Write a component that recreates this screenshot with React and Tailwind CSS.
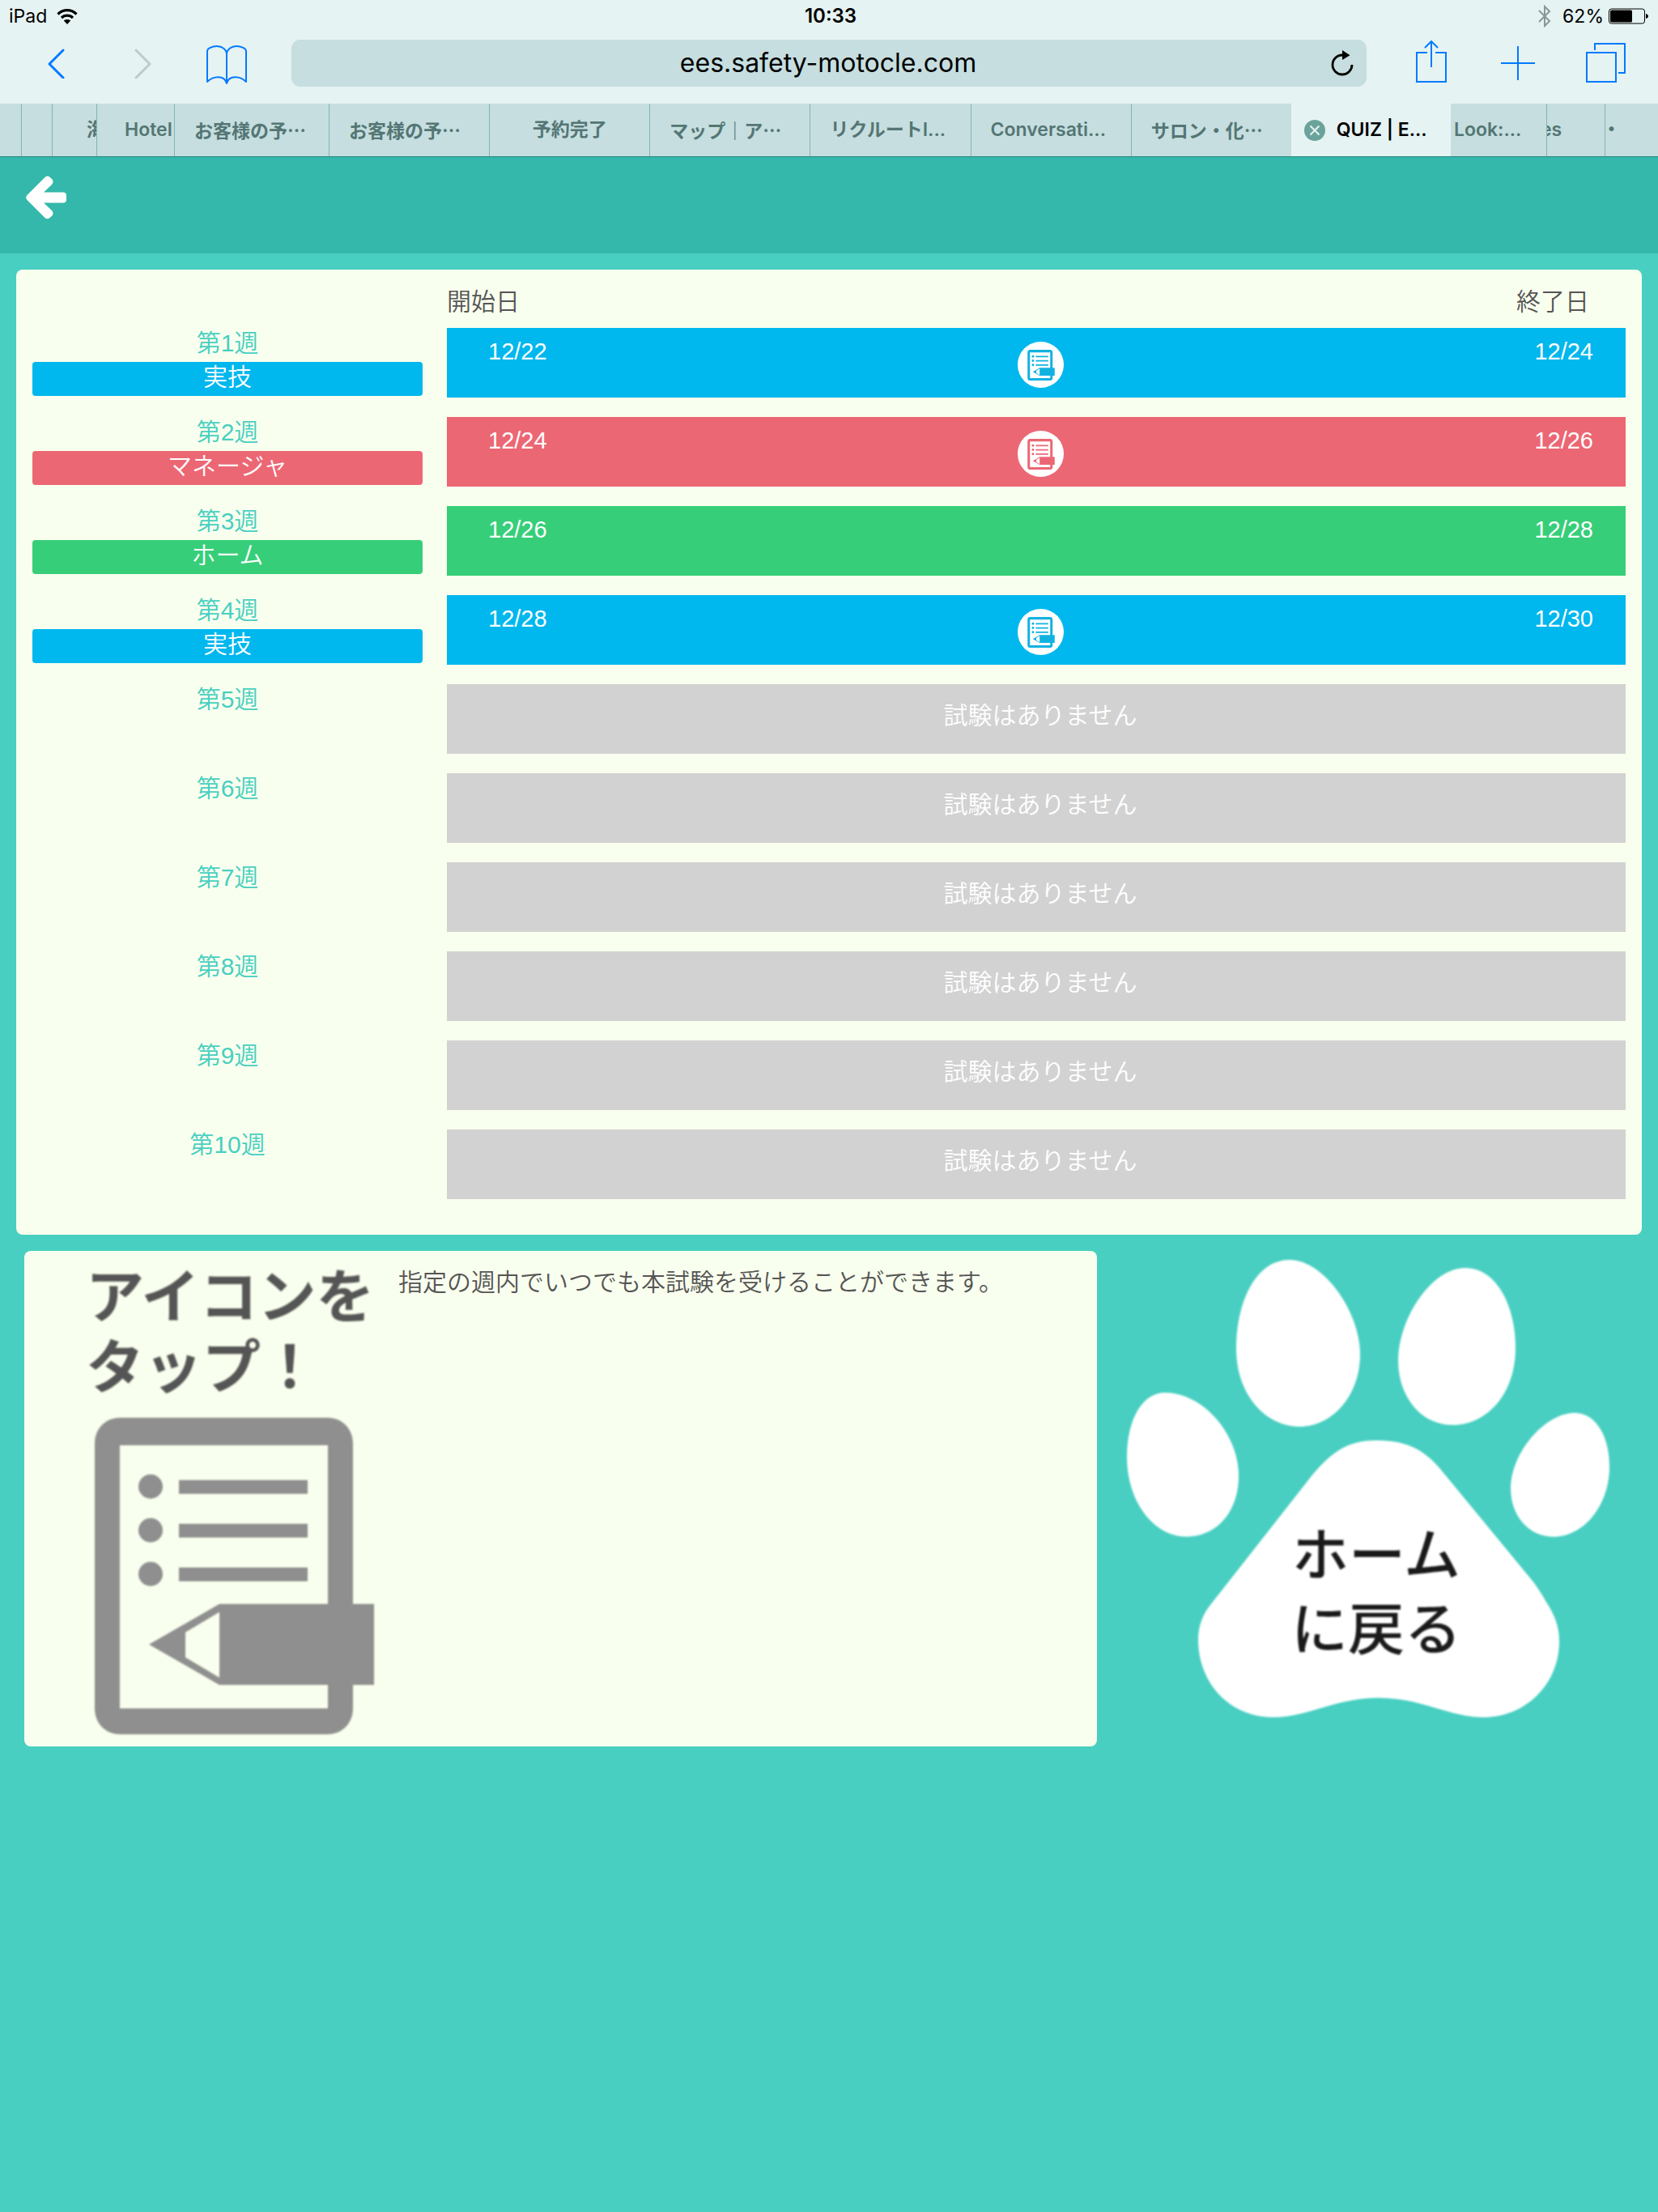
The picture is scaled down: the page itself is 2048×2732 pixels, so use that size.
const SANS = "font-['Liberation_Sans','Noto_Sans_CJK_JP',sans-serif]";

const BLUE = "bg-[#00b7ee]";
const RED = "bg-[#ec6774]";
const GREEN = "bg-[#37ce79]";

const weeks = [
  { week: "第1週", kind: "実技", from: "12/22", to: "12/24", bar: BLUE, ink: "text-[#12b2e0]", exam: true },
  { week: "第2週", kind: "マネージャ", from: "12/24", to: "12/26", bar: RED, ink: "text-[#ec6774]", exam: true },
  { week: "第3週", kind: "ホーム", from: "12/26", to: "12/28", bar: GREEN, ink: "text-[#37ce79]", exam: false },
  { week: "第4週", kind: "実技", from: "12/28", to: "12/30", bar: BLUE, ink: "text-[#12b2e0]", exam: true },
  { week: "第5週" },
  { week: "第6週" },
  { week: "第7週" },
  { week: "第8週" },
  { week: "第9週" },
  { week: "第10週" },
];

const JP = "font-['Noto_Sans_CJK_JP',sans-serif]";

const tabs = [
  { label: "", size: "w-[27px] shrink-0", text: "" },
  { label: "", size: "w-[38px] shrink-0", text: "" },
  { label: "海", size: "w-[55px] shrink-0", text: "pl-[42px]" },
  { label: "Hotel", size: "w-24 shrink-0", text: "pl-[34px]" },
  { label: "お客様の予…", size: "w-[191px] shrink-0", text: "pl-6 " + JP },
  { label: "お客様の予…", size: "flex-1", text: "pl-6 " + JP },
  { label: "予約完了", size: "flex-1", text: "w-full text-center" },
  { label: "マップ｜ア…", size: "flex-1", text: "pl-6 " + JP },
  { label: "リクルートI...", size: "flex-1", text: "pl-6" },
  { label: "Conversati...", size: "flex-1", text: "pl-6" },
  { label: "サロン・化…", size: "flex-1", text: "pl-6 " + JP, last: true },
  { label: "QUIZ | E...", size: "flex-1", active: true },
  { label: "Look:...", size: "w-[119px] shrink-0", text: "pl-1" },
  { label: "es", size: "w-[72px] shrink-0", text: "-ml-2" },
  { label: "・", size: "w-[65px] shrink-0", text: "-ml-1", last: true },
];

function ChecklistIcon({ className }) {
  return (
    <svg viewBox="0 0 345 391" className={className} fill="currentColor" aria-hidden="true">
      <path
        fillRule="evenodd"
        d="M31 0H288C306 0 319 14 319 32V230H345V330H319V359C319 377 306 391 288 391H31C13 391 0 377 0 359V32C0 14 13 0 31 0ZM31 34V359H288V330H154L67 280L154 230H288V34ZM112 265V296L154 321V240Z"
      />
      <circle cx="69" cy="85" r="15" />
      <circle cx="69" cy="139" r="15" />
      <circle cx="69" cy="193" r="15" />
      <path d="M104 77h159v17H104zM104 131h159v17H104zM104 185h159v17H104z" />
    </svg>
  );
}

function StatusBar() {
  return (
    <div className="grid h-10 grid-cols-3 items-center px-[11px] text-[23px] leading-10 text-black">
      <div className="flex items-center gap-3">
        <span>iPad</span>
        <svg viewBox="0 0 26 19" className="h-[19px] w-[26px]" aria-label="Wi-Fi">
          <path d="M1.5 6.5C8 0 18 0 24.500 6.500" fill="none" stroke="#000" strokeWidth="3.200" />
          <path d="M6 11C10 7.200 16 7.200 20 11" fill="none" stroke="#000" strokeWidth="3.200" />
          <path d="M13 19L8.800 14.600C11 12.600 15 12.600 17.200 14.600Z" />
        </svg>
      </div>
      <span className="pl-1 text-center text-2xl leading-10 font-semibold">10:33</span>
      <div className="flex items-center justify-end gap-[6px]">
        <svg viewBox="0 0 16 28" className="mr-2 h-7 w-4" fill="none" stroke="#8b9696" strokeWidth="2" aria-label="Bluetooth">
          <path d="M1 7L14 20L8 26V2L14 8L1 21" />
        </svg>
        <span>62%</span>
        <svg viewBox="0 0 50 20" className="h-5 w-[50px]" aria-label="Battery">
          <rect x="0.500" y="1" width="44" height="18" rx="3" fill="none" stroke="#000" />
          <rect x="2" y="2.500" width="27" height="15" rx="1.500" />
          <path d="M46 7C50 8 50 12 46 13Z" />
        </svg>
      </div>
    </div>
  );
}

function Toolbar() {
  return (
    <div className="flex h-[88px] items-start pt-[9px]">
      <div className="flex h-[58px] w-[360px] shrink-0 items-center">
        <button type="button" aria-label="Back" className="ml-[58px]">
          <svg viewBox="0 0 22 38" className="h-[38px] w-[22px]" fill="none" stroke="#007aff" strokeWidth="3" strokeLinecap="round" strokeLinejoin="round">
            <path d="M20 3L3 20L20 37" />
          </svg>
        </button>
        <button type="button" aria-label="Forward" className="ml-[85px]">
          <svg viewBox="0 0 22 38" className="h-[38px] w-[22px]" fill="none" stroke="#bfcaca" strokeWidth="3" strokeLinecap="round" strokeLinejoin="round">
            <path d="M3 3L20 20L3 37" />
          </svg>
        </button>
        <button type="button" aria-label="Bookmarks" className="ml-[67px]">
          <svg viewBox="0 0 52 52" className="h-[52px] w-[52px]" fill="none" stroke="#007aff" strokeWidth="2" strokeLinejoin="round">
            <path d="M26 15C26 9 20 5 14 5C8 5 2 8 2 11V49C9 42 23 40 26 51C29 40 43 42 50 49V11C50 8 44 5 38 5C32 5 26 9 26 15ZM26 15V51" />
          </svg>
        </button>
      </div>
      <div className="flex h-[58px] flex-1 items-center rounded-[11px] bg-[#c6dedf] pr-4 pl-[42px]">
        <input
          type="text"
          readOnly
          aria-label="Address"
          defaultValue="ees.safety-motocle.com"
          className="min-w-0 flex-1 bg-transparent text-center text-[32px] leading-10 text-black outline-none"
        />
        <button type="button" aria-label="Reload">
          <svg viewBox="0 0 28 32" className="h-8 w-7" aria-hidden="true">
            <path d="M26 18A12 12 0 1 1 14 6" fill="none" stroke="#000" strokeWidth="2.800" />
            <path d="M14 0L23.500 6.200L14 12Z" />
          </svg>
        </button>
      </div>
      <div className="flex h-[58px] w-[360px] shrink-0 items-center">
        <button type="button" aria-label="Share" className="ml-[60px]">
          <svg viewBox="0 0 40 56" className="h-14 w-10" fill="none" stroke="#007aff" strokeWidth="2">
            <path d="M15 15H2V51H38V15H25M20 33V1M12 9L20 1L28 9" />
          </svg>
        </button>
        <button type="button" aria-label="New tab" className="ml-[65px]">
          <svg viewBox="0 0 44 44" className="h-11 w-11" fill="none" stroke="#007aff" strokeWidth="2">
            <path d="M22 1V43M1 22H43" />
          </svg>
        </button>
        <button type="button" aria-label="Show tabs" className="ml-[61px]">
          <svg viewBox="0 0 50 50" className="h-[50px] w-[50px]" fill="none" stroke="#007aff" strokeWidth="2">
            <path d="M2 12H38V48H2ZM12 9V1H49V37H41" />
          </svg>
        </button>
      </div>
    </div>
  );
}

function TabStrip() {
  return (
    <nav aria-label="Tabs" className="flex h-[66px] border-b border-[#23857c] text-[23px] font-semibold">
      {tabs.map((tab, i) =>
        tab.active ? (
          <div key={i} className="min-w-0 flex-1 bg-[#e6f3f3] text-black">
            <div className="flex h-full items-center gap-[14px] pl-4">
              <button type="button" aria-label="Close tab" className="shrink-0">
                <svg viewBox="0 0 26 26" className="h-[26px] w-[26px]">
                  <circle cx="13" cy="13" r="13" fill="#6ba39c" />
                  <path d="M7.500 7.500L18.500 18.500M18.500 7.500L7.500 18.500" stroke="#e6f3f3" strokeWidth="2" />
                </svg>
              </button>
              <a href="#quiz" className="whitespace-nowrap">{tab.label}</a>
            </div>
          </div>
        ) : (
          <a
            key={i}
            href={"#tab" + i}
            className={`flex min-w-0 items-center overflow-hidden bg-[#c6dedf] whitespace-nowrap text-[#547674] ${tab.size} ${tab.last ? "" : "border-r border-[#83b5b3]"}`}
          >
            <span className={tab.text}>{tab.label}</span>
          </a>
        )
      )}
    </nav>
  );
}

function WeekRow({ item }) {
  return (
    <li className="flex h-[110px] items-start">
      <div className="w-[482px] shrink-0 text-center">
        <div className="h-[42px] leading-[38px] text-[#48cfc1]">{item.week}</div>
        {item.kind && <div className={`h-[42px] rounded-[4px] leading-[38px] text-white ${item.bar}`}>{item.kind}</div>}
      </div>
      {item.kind ? (
        <div className={`ml-[30px] flex h-[86px] flex-1 items-start justify-between pr-10 pl-[51px] text-white ${item.bar}`}>
          <span className="pt-2 text-[29px] leading-[42px]">{item.from}</span>
          {item.exam && (
            <button type="button" aria-label={item.week + " 試験"} className={`mt-[17px] flex h-[57px] w-[57px] items-center justify-center rounded-full bg-white ${item.ink}`}>
              <ChecklistIcon className="h-[38px] w-[34px]" />
            </button>
          )}
          <span className="pt-2 text-[29px] leading-[42px]">{item.to}</span>
        </div>
      ) : (
        <div className="ml-[30px] h-[86px] flex-1 bg-[#d2d2d2] pt-[18px] pl-[10px] text-center leading-[42px] text-white">試験はありません</div>
      )}
    </li>
  );
}

function PawButton() {
  return (
    <button type="button" className="relative mt-[5px] ml-[35px] w-[600px] shrink-0 text-[70px] leading-[92px] font-medium text-[#1a1a1a]">
      <svg viewBox="0 0 600 575" className="w-full fill-white blur-[1px]" aria-hidden="true">
        <path d="M49 170C20 170 2 205 2 249C2 305 35 348 76 348C112 348 140 318 140 273C140 220 95 170 49 170Z" />
        <path d="M203 6C160 6 137 60 137 115C137 175 175 212 215 212C257 212 290 172 290 123C290 70 245 6 203 6Z" />
        <path d="M420 16C377 16 337 80 337 130C337 175 365 210 404 210C448 210 482 170 482 115C482 62 458 16 420 16Z" />
        <path d="M555 195C518 195 476 245 476 288C476 322 498 348 529 348C567 348 598 308 598 262C598 222 580 195 555 195Z" />
        <path d="M309 229C275 229 255 243 230 273L106 431C96 443 90 458 90 475C90 528 128 571 183 571C225 571 260 547 313 547C366 547 400 571 442 571C495 571 536 530 536 477C536 458 530 444 519 427C515 420 510 412 505 405L388 263C366 238 345 229 309 229Z" />
      </svg>
      <span className="absolute inset-x-0 top-[326px] pl-5 blur-[1px]">
        ホーム
        <br />
        に戻る
      </span>
    </button>
  );
}

export default function App() {
  return (
    <div className={`min-h-screen bg-[#48cfc1] ${SANS}`}>
      <header className="bg-[#e6f3f3] font-['Inter','Noto_Sans_CJK_JP',sans-serif]">
        <StatusBar />
        <Toolbar />
        <TabStrip />
      </header>

      <div className="h-[119px] bg-[#34b8ab] pt-[23px] pl-8">
        <button type="button" aria-label="戻る">
          <svg viewBox="0 0 50 54" className="h-[54px] w-[50px] fill-white">
            <path d="M46 20.500H22L31.500 11.500C34 9 34 6.500 32.500 4.500L29.500 1.800C27.500 0 25.500 0.300 23.500 2L1.500 24C-0.300 26 -0.300 28 1.500 30L23.500 52C25.500 53.800 27.500 53.800 29.500 52L32.500 49.200C34 47 34 44.800 31.500 42.500L22 33.500H46C48.500 33.500 50 32 50 29.500V24.500C50 22 48.500 20.500 46 20.500Z" />
          </svg>
        </button>
      </div>

      <main className="px-5 pt-5 text-[30px]">
        <section className="rounded-lg bg-[#f9ffee] px-5 pb-5 font-[350]">
          <div className="flex h-[72px] items-center justify-between pt-2 pr-[45px] pl-[512px] leading-[42px] text-[#555]">
            <span>開始日</span>
            <span>終了日</span>
          </div>
          <ul>
            {weeks.map((item) => (
              <WeekRow key={item.week} item={item} />
            ))}
          </ul>
        </section>

        <div className="mt-5 flex items-start pl-[10px]">
          <section className="flex h-[612px] flex-1 items-start rounded-lg bg-[#f9ffee] text-[#555]">
            <div className="ml-[76px] w-[386px] shrink-0 pt-[14px] blur-[1px]">
              <h2 className="text-[72px] leading-[87px] font-bold whitespace-nowrap">
                アイコンを
                <br />
                タップ！
              </h2>
              <ChecklistIcon className="mt-[18px] ml-[11px] h-[391px] w-[345px] text-[#8f8f8f]" />
            </div>
            <p className="pt-[18px] leading-[42px] font-[350]">指定の週内でいつでも本試験を受けることができます。</p>
          </section>
          <PawButton />
          <div className="w-[38px] shrink-0" />
        </div>
      </main>
    </div>
  );
}
